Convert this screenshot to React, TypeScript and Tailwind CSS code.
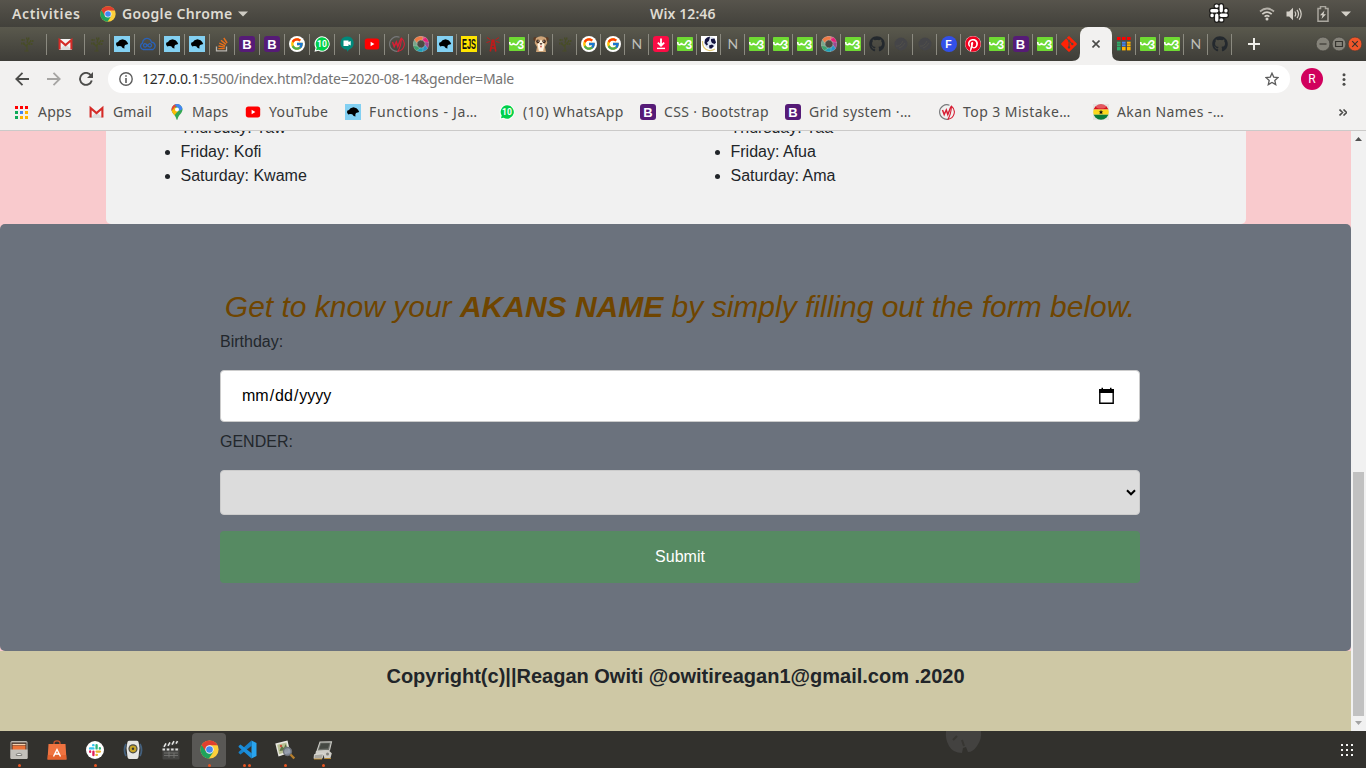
import React from "react";
import { FaGithub, FaPinterest, FaGitAlt } from "react-icons/fa";
import { FcGoogle } from "react-icons/fc";

/* ---------- favicons ---------- */

const Tree = () => (
  <svg width="16" height="16" viewBox="0 0 16 16" fill="none" stroke="#484d27" strokeWidth="1.2">
    <path d="M8 15V8M8 11L4 7M8 9l4-4M5.5 15h4M8 7l1-4" />
    <path d="M2 7.5h4M2.5 4h3M7 2.5h4M11 5h4M10 8h3.5" strokeWidth="2" strokeDasharray="1.4 .6" />
  </svg>
);

const Gmail = () => (
  <svg width="15" height="16" viewBox="0 0 15 16">
    <rect x="1" y="3" width="13" height="11" rx="1" fill="#f4f4f4" />
    <path d="M1 14l6.5-6 6.5 6z" fill="#dcdcdc" />
    <path d="M1.6 13.6V4l5.9 5.1L13.4 4v9.6" fill="none" stroke="#d52b27" strokeWidth="2.1" />
  </svg>
);

const Dino = () => (
  <svg width="16" height="16" viewBox="0 0 16 16">
    <rect width="16" height="16" fill="#83d0f2" />
    <path d="M2.200 6.800L4 6l1.500-1.800 3-.9 3 .9 1.700 1.800 1 2-1.500.5-1.700.6-.7 1.600.2 1.800-1.800-.6-1.500-1.700-2.200-.2-1.700.4-1.200-1.600z" fill="#000" />
  </svg>
);

const Cloud = () => (
  <svg width="17" height="16" viewBox="0 0 17 16" fill="none" stroke="#2a62b8" strokeWidth="1.3">
    <path d="M4 13.500a3.400 3.400 0 01-.6-6.300C3.500 3.400 7 1.700 9.500 2.700c2 .6 2.700 2 3 3.400 4 .3 5 5.200 1.500 7.400z" />
    <path d="M8.500 9.500C7 7.500 6.300 7.400 5.600 7.600c-1.800.8-1.300 3.600.6 3.500C7.500 11 9 8 10.600 7.600c2.400-.2 2.500 3.400.3 3.500-1 0-1.700-.8-2.400-1.600z" />
  </svg>
);

const StackOverflow = () => (
  <svg width="16" height="16" viewBox="0 0 16 16" fill="none">
    <path d="M2.500 10.500v4.300h10v-4.300" stroke="#b8b4ad" strokeWidth="1.300" />
    <path d="M4.300 12.600h6.400M4.500 10l6.300 1.100M5.300 7.200l5.800 2.600M7 4.300l4.900 4.100M9.800 2l3.300 5" stroke="#e8701a" strokeWidth="1.400" />
  </svg>
);

const Boot = () => (
  <span className="flex h-4 w-4 items-center justify-center rounded-[3px] bg-[#561b77] font-['Liberation_Sans',sans-serif] text-[13px] leading-none font-bold text-white">B</span>
);

const Google = () => (
  <span className="flex h-4 w-4 items-center justify-center rounded-full bg-white"><FcGoogle size={14} /></span>
);

const WhatsApp = ({ small }: { small?: boolean }) => (
  <svg width="16" height="16" viewBox="0 0 16 16">
    <path d="M8 .3a7.700 7.700 0 11-3.600 14.500L.5 15.700l1-3.800A7.700 7.700 0 018 .3z" fill={small ? "#f8fff9" : "#fff"} />
    <path d="M8 1.300a6.700 6.700 0 11-3.400 12.400L2 14.200l.7-2.600A6.700 6.700 0 018 1.300z" fill="#00d04a" />
    <text x="7.900" y="11" textAnchor="middle" fontSize="8.500" fontWeight="700" fill="#fff" fontFamily="Roboto, sans-serif">10</text>
  </svg>
);

const Hangouts = () => (
  <svg width="16" height="16" viewBox="0 0 16 16">
    <path d="M8 .4a6.700 6.700 0 012.500 12.900L8 15.800v-2.200A6.600 6.600 0 018 .4z" fill="#00897b" />
    <path d="M4.500 4.500h5v1.600L11.700 5v4.500L9.500 8.300V10h-5z" fill="#fff" />
  </svg>
);

const YouTube = () => (
  <svg width="16" height="16" viewBox="0 0 16 16">
    <rect x=".8" y="2.600" width="14.400" height="10.800" rx="2.600" fill="#f00" />
    <path d="M6.600 5.800v4.400L10.400 8z" fill="#fff" />
  </svg>
);

const Wix = () => (
  <svg width="16" height="16" viewBox="0 0 16 16" fill="none" strokeWidth="1.100">
    <path d="M10 15A7.300 7.300 0 1110.500 1.200" stroke="#77787a" />
    <path d="M12.500 2.200a7.300 7.300 0 01-3.500 13Q12 10 12.500 2.200z" stroke="#d71f35" />
    <path d="M3.500 6l1.700 4.500L7.300 6l1.500 4.500L12 2.500" stroke="#d71f35" strokeWidth="1.500" />
  </svg>
);

const swirlColors = ["#e0567c", "#e91e78", "#9c4a8f", "#2795c9", "#1f9fb5", "#3ea06b", "#7aa58a", "#ee7a45"];
const Swirl = () => (
  <svg width="16" height="16" viewBox="0 0 16 16">
    {swirlColors.map((c, i) => (
      <path key={c} d="M6.500 0C10.500-.2 13.300 1.500 14.500 4.500L11.300 6C10.400 4 8.500 3.300 5.800 4.300z" fill={c} stroke="#c8cfc5" strokeWidth=".3" transform={`rotate(${i * 45} 8 8)`} />
    ))}
  </svg>
);

const Ejs = () => (
  <span className="flex h-4 w-4 bg-[#ffe400]">
    <svg width="16" height="16" viewBox="0 0 16 16">
      <text x="1" y="13.200" textLength="14" lengthAdjust="spacingAndGlyphs" fontSize="14.500" fontWeight="700" fontFamily="'Liberation Sans', sans-serif" fill="#111">EJS</text>
    </svg>
  </span>
);

const Tower = () => (
  <svg width="16" height="16" viewBox="0 0 16 16" fill="none" stroke="#c11a1a">
    <path d="M7 6L5.300 15.500M9 6l1.800 9.500M6 12h4.200M6.500 9h3" strokeWidth="1.600" />
    <circle cx="8" cy="5" r="1.800" fill="#c11a1a" stroke="none" />
    <path d="M5.500 3.800L2 1.500M5 5.500L1.500 6.500M10.500 3.800L14 1.500M11 5.500l3.500 1" strokeWidth="1" />
  </svg>
);

const W3 = () => (
  <svg width="16" height="14" viewBox="0 0 16 14">
    <rect width="16" height="14" rx=".8" fill="#6fda33" />
    <path d="M.8 5v1.200q0 1.600 1.700 1.600T4.500 6q.5 1.800 2.300 1.800T9.500 5" fill="none" stroke="#fff" strokeWidth="1.600" />
    <text x="8.600" y="11.600" fontSize="12" fontWeight="700" fontFamily="'Liberation Sans', sans-serif" fill="#fff">3</text>
  </svg>
);

const Meerkat = () => (
  <svg width="16" height="16" viewBox="0 0 16 16">
    <circle cx="2.300" cy="3" r="2" fill="#5d3b24" />
    <circle cx="13.700" cy="3" r="2" fill="#5d3b24" />
    <path d="M3 2Q8-1.500 13 2l1.300 5-2.300 4 1 5H3l1-5L1.700 7z" fill="#cda377" />
    <path d="M4.500 8.500L8 3.500l3.500 5-1.300 6.500H5.800z" fill="#fff3df" />
    <ellipse cx="4.900" cy="5.300" rx="1.600" ry="1.900" fill="#3b2518" />
    <ellipse cx="11.100" cy="5.300" rx="1.600" ry="1.900" fill="#3b2518" />
    <circle cx="5.200" cy="5" r=".6" fill="#fff" />
    <circle cx="10.800" cy="5" r=".6" fill="#fff" />
    <path d="M6.500 7.200h3L8 9z" fill="#2b1810" />
    <path d="M6.800 9.800h2.400L8 12z" fill="#c8504a" />
  </svg>
);

const Enn = () => (
  <span className="w-4 pl-[3px] font-['Lato',sans-serif] text-[14px] leading-4 text-[#bfbeb8]">N</span>
);

const Download = () => (
  <svg width="16" height="16" viewBox="0 0 16 16">
    <rect width="16" height="16" rx="3" fill="#fb0d45" />
    <path d="M8 2.500v7M4.800 6.700L8 9.700l3.200-3" fill="none" stroke="#fff" strokeWidth="1.800" />
    <path d="M4 12.400h8" stroke="#fff" strokeWidth="1.400" />
  </svg>
);

const Globe = () => (
  <svg width="16" height="16" viewBox="0 0 16 16">
    <rect width="16" height="16" fill="#fff" />
    <path d="M1.500 5Q1 13 8 14.500q3 .3 6-1.500" fill="none" stroke="#e3cb78" strokeWidth="1.200" />
    <circle cx="9" cy="6.500" r="6" fill="#dfe5f2" />
    <path d="M4 3.500Q6 .5 9 .8L8.500 3 7.800 5 6 6.500 7 8.500 5.500 9.500 3.500 7zM10 3l3.500-.5 1.500 4-1.500 1.500L11 7 10 5zM8 9.500l3-1 2 1.500-2.500 2.500H8.500z" fill="#14143f" />
  </svg>
);

const Dim = () => (
  <svg width="16" height="16" viewBox="0 0 16 16">
    <circle cx="8" cy="8" r="6.500" fill="#454548" />
    <path d="M3 10q4 1 7-5M6 12q4-1 6-5" stroke="#504f4a" fill="none" />
  </svg>
);

const Git = () => <FaGitAlt size={18} color="#ff2205" />;
const Hub = () => <FaGithub size={16} color="#24292e" />;
const Pin = () => (
  <span className="flex h-4 w-4 items-center justify-center rounded-full bg-white"><FaPinterest size={16} color="#f0001f" /></span>
);
const Eff = () => (
  <span className="flex h-4 w-4 items-center justify-center rounded-full bg-[#3350e8] font-['Liberation_Sans',sans-serif] text-[10.500px] leading-none font-bold text-white">F</span>
);

const gridColors = ["#f00", "#f00", "#f00", "#0faa58", "#4285f4", "#ffb400", "#0faa58", "#ffb400", "#ffb400"];
const AppsGrid = () => (
  <svg width="13" height="13" viewBox="0 0 13 13">
    {gridColors.map((c, i) => (
      <rect key={i} x={(i % 3) * 5} y={Math.floor(i / 3) * 5} width="3" height="3" fill={c} />
    ))}
  </svg>
);
const tabGridRows = [0, 4.700, 7.300, 9.900];
const TabGrid = () => (
  <svg width="14" height="14" viewBox="0 0 14 14">
    {[0, 5, 10].map((x, col) => (
      <g key={x}>
        <rect x={x} y="0" width="3.600" height="3" fill="#f00" />
        {tabGridRows.slice(1).map((y, row) => (
          <rect key={y} x={x} y={y} width="3.600" height={row === 2 ? 3.500 : 2} fill={col === 0 ? "#2fae6a" : col === 1 && row < 2 ? "#4285f4" : "#ffb400"} />
        ))}
      </g>
    ))}
  </svg>
);

const MapsPin = () => (
  <svg width="16" height="16" viewBox="0 0 16 16">
    <defs>
      <clipPath id="pin"><path d="M8 0a5.500 5.500 0 015.500 5.600C13.500 9.500 9.200 11 8.600 15.200Q8 16.500 7.400 15.200C6.800 11 2.500 9.500 2.500 5.600A5.500 5.500 0 018 0z" /></clipPath>
    </defs>
    <g clipPath="url(#pin)">
      <rect width="16" height="16" fill="#34a853" />
      <path d="M0 0h9L2 8z" fill="#ea4335" />
      <path d="M8-2h8v6L10 7z" fill="#4285f4" />
      <path d="M1 8.500L6 3l3 4-5 6z" fill="#fbbc04" />
      <path d="M5 0h7L9 4z" fill="#4285f4" />
    </g>
    <circle cx="8" cy="5.500" r="2" fill="#fff" />
  </svg>
);

const Ghana = () => (
  <svg width="16" height="16" viewBox="0 0 16 16">
    <rect width="16" height="16" fill="#e4e4e2" />
    <clipPath id="gh"><circle cx="8" cy="8" r="7.800" /></clipPath>
    <g clipPath="url(#gh)">
      <rect width="16" height="5.500" fill="#d8101c" />
      <rect y="5.500" width="16" height="5.200" fill="#fbd81c" />
      <rect y="10.700" width="16" height="5.300" fill="#0a7a38" />
      <ellipse cx="8" cy="2.500" rx="5" ry="2" fill="#fff" opacity=".3" />
    </g>
    <path d="M8 5.800l.7 1.600h1.600L9 8.500l.5 1.800L8 9.200l-1.500 1.100.5-1.800-1.300-1.100h1.600z" fill="#111" />
  </svg>
);

const Chrome = ({ size }: { size: number }) => (
  <svg width={size} height={size} viewBox="0 0 24 24">
    <circle cx="12" cy="12" r="11.500" fill="#fdd03b" />
    <path d="M12 12L2 6.300A11.500 11.500 0 0011.300 23.500L17 14.800z" fill="#1fa35c" />
    <path d="M12 6.700h10.200A11.500 11.500 0 002 6.300l5.400 8.300z" fill="#e0402f" />
    <circle cx="12" cy="12" r="5.300" fill="#f3f5f8" />
    <circle cx="12" cy="12" r="4.200" fill="#4388f2" />
  </svg>
);

const SlackMark = ({ size, colors, halo }: { size: number; colors: string[]; halo?: boolean }) => (
  <svg width={size} height={size} viewBox="0 0 24 24" strokeLinecap="round">
    {halo && [0, 90, 180, 270].map((a) => (
      <path key={a} d="M3.500 9.300h5.800M9.300 3.700h-.4" stroke="#1d1c1a" strokeWidth="7" transform={`rotate(${a} 12 12)`} />
    ))}
    {colors.map((c, i) => (
      <path key={i} d="M3.500 9.300h5.800M9.500 3.700h-.7" stroke={c} strokeWidth="4" transform={`rotate(${i * 90} 12 12)`} />
    ))}
  </svg>
);

/* ---------- browser tabs ---------- */

const firstTabs = [Tree, Dino, Cloud, Dino, Dino, StackOverflow, Boot, Boot, Google, WhatsApp, Hangouts, YouTube];
const nextTabs = [
  Wix, Swirl, Dino, Ejs, Tower, W3, Meerkat, Tree, Google, Google, Enn, Download, W3, Globe, Enn,
  W3, W3, W3, Swirl, W3, Hub, Dim, Dim, Eff, Pin, W3, Boot, W3,
];
const lastTabs = [TabGrid, W3, W3, Enn, Hub];

const Tab = ({ width, children, bare }: { width: string; children: React.ReactNode; bare?: boolean }) => (
  <div className={`flex h-full shrink-0 items-center ${width}`}>
    <div className="flex min-w-0 flex-1 justify-center">{children}</div>
    {!bare && <div className="h-[21px] w-px bg-[#8b8a80]" />}
  </div>
);

const WinButton = ({ red, d }: { red?: boolean; d: string }) => (
  <svg width="16" height="16" viewBox="0 0 16 16">
    <circle cx="8" cy="8" r="6.900" fill={red ? "#f0562a" : "#85837a"} stroke="#3a3934" strokeWidth=".6" />
    <path d={d} fill="none" stroke="#33322d" strokeWidth="1.100" />
  </svg>
);

const TopBar = () => (
  <div className="flex h-[27px] items-center bg-gradient-to-b from-[#57544c] to-[#42413b] font-['Noto_Sans','Open_Sans',sans-serif] text-[14px] font-semibold text-[#dfdbd2]">
    <span className="ml-3 w-[88px] text-[14px] tracking-[0.6px]">Activities</span>
    <Chrome size={16} />
    <span className="ml-1.5 w-[116px] whitespace-nowrap tracking-[0.35px]">Google Chrome</span>
    <svg width="10" height="6" viewBox="0 0 10 6"><path d="M0 .5h10L5 5.500z" fill="#cfccc4" /></svg>
    <span className="ml-[402px] w-[80px] whitespace-nowrap text-[14px] tracking-[0.1px]">Wix 12:46</span>
    <div className="ml-auto flex h-full items-center">
      <span className="-mt-px flex"><SlackMark size={20} halo colors={["#fff", "#fff", "#fff", "#fff"]} /></span>
      <svg className="ml-[30px]" width="16" height="14" viewBox="0 0 16 14" fill="none" stroke="#d4d0c8" strokeWidth="1.700">
        <path d="M1 4.500Q8-1.500 15 4.500" opacity=".75" />
        <path d="M3.300 7.200Q8 3 12.700 7.200M5.600 9.700Q8 7.700 10.400 9.700" />
        <circle cx="8" cy="12" r="1.500" fill="#d4d0c8" stroke="none" />
      </svg>
      <svg className="ml-[11px]" width="16" height="14" viewBox="0 0 16 14">
        <path d="M.5 4.500h2.700L7 .8v12.400L3.200 9.500H.5z" fill="#d4d0c8" />
        <path d="M8.800 4.500q1.800 2.500 0 5M11 2.800q3 4.200 0 8.400M13.200 1.300q4 5.700 0 11.400" fill="none" stroke="#d4d0c8" strokeWidth="1.200" />
      </svg>
      <svg className="ml-[15px]" width="12" height="16" viewBox="0 0 12 16">
        <path d="M1 2.500h2.500v-2h5v2H11v12.700H1z" fill="none" stroke="#aaa79f" strokeWidth="1.500" />
        <path d="M7.500 4.500L3 9.300h2.500L4.500 13 9 8.200H6.500z" fill="#d4d0c8" />
      </svg>
      <svg className="mr-[15px] ml-[12px]" width="10" height="6" viewBox="0 0 10 6"><path d="M0 .5h10L5 5.500z" fill="#d4d0c8" /></svg>
    </div>
  </div>
);

const TabStrip = () => (
  <div className="flex h-[34px] bg-gradient-to-b from-[#5a594d] to-[#3e3d38]">
    <Tab width="w-[47px] pl-2"><Tree /></Tab>
    <Tab width="w-[38px]"><Gmail /></Tab>
    {firstTabs.map((Icon, i) => <Tab key={i} width="w-[25px]"><Icon /></Tab>)}
    {nextTabs.map((Icon, i) => <Tab key={i} width="w-[24px]"><Icon /></Tab>)}
    <Tab width="w-[23px]" bare><Git /></Tab>
    <div className="relative flex w-8 shrink-0 items-center justify-center rounded-t-[8px] bg-[#f2f1f0]">
      <svg className="absolute bottom-0 -left-2" width="8" height="8"><path d="M8 0v8H0Q8 8 8 0z" fill="#f2f1f0" /></svg>
      <svg className="absolute -right-2 bottom-0" width="8" height="8"><path d="M0 0v8h8Q0 8 0 0z" fill="#f2f1f0" /></svg>
      <svg width="8" height="8" viewBox="0 0 8 8"><path d="M.5.5l7 7M7.500.5l-7 7" stroke="#4a4a48" strokeWidth="1.600" /></svg>
    </div>
    {lastTabs.map((Icon, i) => <Tab key={i} width="w-[24px]"><Icon /></Tab>)}
    <div className="flex w-11 items-center justify-center">
      <svg width="12" height="12"><path d="M6 0v12M0 6h12" stroke="#f0efea" strokeWidth="2" /></svg>
    </div>
    <div className="mr-[3px] ml-auto flex items-center">
      <WinButton d="M4.500 8h7" />
      <WinButton d="M4.600 5.500h6.800v5H4.600z" />
      <WinButton red d="M5.200 5.200l5.600 5.600M10.800 5.200l-5.600 5.600" />
    </div>
  </div>
);

const Toolbar = () => (
  <div className="flex h-9 items-center">
    <svg className="ml-[15px]" width="14" height="14" viewBox="0 0 14 14" fill="none" stroke="#4c4c4a" strokeWidth="1.800"><path d="M14 7H1.500M7.500.8L1.300 7l6.200 6.200" /></svg>
    <svg className="ml-[18px]" width="14" height="14" viewBox="0 0 14 14" fill="none" stroke="#a6a5a3" strokeWidth="1.800"><path d="M0 7h12.500M6.500.8L12.700 7l-6.200 6.200" /></svg>
    <svg className="ml-[18px]" width="14" height="14" viewBox="0 0 14 14"><path d="M12 3.500A6 6 0 1012.800 8.500" fill="none" stroke="#4c4c4a" strokeWidth="1.900" /><path d="M14 0v6H8z" fill="#4c4c4a" /></svg>
    <div className="ml-[15px] flex h-7 w-[1182px] items-center rounded-full bg-white">
      <svg className="ml-[11px]" width="14" height="14" viewBox="0 0 14 14"><circle cx="7" cy="7" r="6.200" fill="none" stroke="#5d5d5d" strokeWidth="1.400" /><path d="M7 3.200v1.500M7 6v5" stroke="#5d5d5d" strokeWidth="1.600" /></svg>
      <span className="ml-[9px] whitespace-nowrap font-['Noto_Sans','Open_Sans',sans-serif] text-[14px] leading-5 tracking-[-0.24px] text-[#747474]"><span className="text-[#2d2d2d]">127.0.0.1</span>:5500/index.html?date=2020-08-14&amp;gender=Male</span>
      <svg className="mr-[11px] ml-auto" width="14" height="14" viewBox="0 0 24 24" fill="none" stroke="#5c5c5c" strokeWidth="2.200"><path d="M12 2l3 6.800 7.300.7-5.500 4.900 1.600 7.200L12 17.800l-6.400 3.800 1.600-7.200L1.700 9.500 9 8.800z" /></svg>
    </div>
    <span className="ml-[11px] flex h-[22px] w-[22px] items-center justify-center rounded-full bg-[#d1005d] font-['Roboto',sans-serif] text-[12px] text-white">R</span>
    <svg className="ml-[19px]" width="4" height="13" viewBox="0 0 4 13" fill="#4c4c4a"><circle cx="2" cy="1.700" r="1.500" /><circle cx="2" cy="6.500" r="1.500" /><circle cx="2" cy="11.300" r="1.500" /></svg>
  </div>
);

const bookmarks: { icon: React.ReactNode; label: string; pad: string; gap: string; track: string }[] = [
  { icon: <AppsGrid />, label: "Apps", pad: "w-[75px] pl-[15px]", gap: "ml-[10px]", track: "tracking-[0.2px]" },
  { icon: <Gmail />, label: "Gmail", pad: "w-[94px] pl-[14px]", gap: "ml-[9px]", track: "tracking-[0.1px]" },
  { icon: <MapsPin />, label: "Maps", pad: "w-[76px]", gap: "ml-[7px]", track: "tracking-[0.1px]" },
  { icon: <YouTube />, label: "YouTube", pad: "w-[100px]", gap: "ml-[8px]", track: "tracking-[0.4px]" },
  { icon: <Dino />, label: "Functions - Ja…", pad: "w-[154px]", gap: "ml-[8px]", track: "tracking-[0.7px]" },
  { icon: <WhatsApp small />, label: "(10) WhatsApp", pad: "w-[141px]", gap: "ml-[8px]", track: "tracking-[0.4px]" },
  { icon: <Boot />, label: "CSS · Bootstrap", pad: "w-[145px]", gap: "ml-[8px]", track: "tracking-[0.32px]" },
  { icon: <Boot />, label: "Grid system ·…", pad: "w-[154px]", gap: "ml-[8px]", track: "tracking-[0.4px]" },
  { icon: <Wix />, label: "Top 3 Mistake…", pad: "w-[154px]", gap: "ml-[8px]", track: "tracking-[0.45px]" },
  { icon: <Ghana />, label: "Akan Names -…", pad: "w-[154px]", gap: "ml-[8px]", track: "tracking-[0.4px]" },
];

const Bookmarks = () => (
  <div className="flex h-[33px] items-center pb-[3px] font-['Noto_Sans','Open_Sans',sans-serif] text-[14px] text-[#4f4f4d]">
    {bookmarks.map((b) => (
      <div key={b.label} className={`flex shrink-0 items-center whitespace-nowrap ${b.pad}`}>
        {b.icon}
        <span className={`leading-5 ${b.gap} ${b.track}`}>{b.label}</span>
      </div>
    ))}
    <svg className="mr-[19px] ml-auto" width="8" height="7" viewBox="0 0 8 7"><path d="M.5.500l3 3-3 3M4.500.500l3 3-3 3" fill="none" stroke="#4c4c4a" strokeWidth="1.600" /></svg>
  </div>
);

/* ---------- page ---------- */

const NameList = ({ names }: { names: string[] }) => (
  <ul className="w-[550px] shrink-0 list-disc leading-6">
    {names.map((n) => <li key={n}>{n}</li>)}
  </ul>
);

const Page = () => (
  <div className="flex min-w-0 flex-1 flex-col bg-[#f9cacd] font-['Liberation_Sans',Arial,sans-serif] text-[16px] text-[#212529]">
    <div className="ml-[106px] h-[93px] w-[1140px] overflow-hidden rounded-b-[5px] bg-[#f1f1f1]">
      <div className="-mt-[15px] flex pl-[74.500px]">
        <NameList names={["Thursday: Yaw", "Friday: Kofi", "Saturday: Kwame"]} />
        <NameList names={["Thursday: Yaa", "Friday: Afua", "Saturday: Ama"]} />
      </div>
    </div>
    <form className="h-[427px] rounded-[5px] bg-[#6b727d] pt-[64px] pl-[220px]">
      <div className="flex w-[920px] flex-col">
        <h2 className="h-[42px] text-center text-[30px] leading-[38px] whitespace-nowrap text-[#6f4500] italic">
          Get to know your <b>AKANS NAME</b> by simply filling out the form below.
        </h2>
        <label className="h-10 leading-6 text-[#22272c]">Birthday:</label>
        <div className="flex h-[52px] items-center justify-between rounded-[4px] border border-[#ccc] bg-white pr-[24px] pl-[21px] text-black">
          <span className="flex gap-px"><span>mm</span><span>/</span><span>dd</span><span>/</span><span>yyyy</span></span>
          <svg width="17" height="18" viewBox="0 0 17 18">
            <path d="M1.800 3.500h13.400v12.700H1.800z" fill="none" stroke="#000" strokeWidth="1.400" />
            <path d="M1 2h15v4H1zM3.500.800h1.500V3H3.500zM12 .800h1.500V3H12z" />
          </svg>
        </div>
        <label className="h-12 pt-2 leading-6 text-[#22272c]">GENDER:</label>
        <div className="flex h-[45px] items-center justify-end rounded-[4px] border border-[#ccc] bg-[#dcdcdc] pr-[3px]">
          <svg width="10" height="7" viewBox="0 0 10 7"><path d="M1 1.300l4 4 4-4" fill="none" stroke="#000" strokeWidth="2" /></svg>
        </div>
        <button type="button" className="mt-4 h-[52px] rounded-[4px] bg-[#568a62] text-[16px] text-white">Submit</button>
      </div>
    </form>
    <footer className="flex-1 bg-[#cec8a5] pt-[10px] text-center text-[20px] leading-[30px] font-bold">
      Copyright(c)||Reagan Owiti @owitireagan1@gmail.com .2020
    </footer>
  </div>
);

const Scrollbar = () => (
  <div className="flex w-[15px] shrink-0 flex-col items-center bg-[#f1f1f1]">
    <svg className="mt-[6px]" width="7" height="4"><path d="M0 4l3.500-4L7 4z" fill="#505050" /></svg>
    <div className="mt-[331px] h-[244px] w-[11px] bg-[#c1c1c1]" />
    <svg className="mt-[5px]" width="7" height="4"><path d="M0 0l3.500 4L7 0z" fill="#a3a3a3" /></svg>
  </div>
);

/* ---------- dock ---------- */

const Files = () => (
  <svg width="20" height="20" viewBox="0 0 20 20">
    <rect x="1.500" y="1" width="17" height="18" rx="1.500" fill="#b9b6af" />
    <rect x="2.500" y="2.500" width="15" height="8" fill="#463026" />
    <path d="M3.500 5.500h13V10h-13z" fill="#eb7338" /><path d="M3.500 4.500h13" stroke="#f6d2ae" strokeWidth="1.300" />
    <path d="M1.500 9.500h17V18q0 1-1 1h-15q-1 0-1-1z" fill="#c3c0ba" />
    <path d="M7.300 15.500v-1.300q2.700-2 5.400 0v1.300z" fill="#f4f3f1" stroke="#6b6965" strokeWidth=".8" />
  </svg>
);
const Software = () => (
  <svg width="20" height="20" viewBox="0 0 20 20">
    <path d="M7 6V3q0-2.200 3-2.200T13 3v3" fill="none" stroke="#c5502a" strokeWidth="1.300" />
    <path d="M1.500 4h17L19.500 19.500H.5z" fill="#ef7340" />
    <path d="M.8 15h18.400l.3 4.500H.5z" fill="#e4632f" />
    <path d="M6.500 16.500l3.500-7 3.500 7M7.500 14h5" fill="none" stroke="#fff" strokeWidth="1.400" />
  </svg>
);
const SlackApp = () => (
  <span className="flex h-[18px] w-[18px] items-center justify-center rounded-full bg-white">
    <SlackMark size={14} colors={["#36c5f0", "#2eb67d", "#ecb22e", "#e01e5a"]} />
  </span>
);
const Speaker = () => (
  <svg width="20" height="20" viewBox="0 0 20 20">
    <path d="M3 4q-3 6 0 12M17 4q3 6 0 12" fill="none" stroke="#44607d" strokeWidth="1.800" />
    <path d="M6 .8h8q1.500 0 1.700 2L16.500 8l-1 9q-.2 2-2 2h-7q-1.800 0-2-2l-1-9 .8-5.200Q4.500.8 6 .8z" fill="#e6e6e3" />
    <circle cx="10" cy="8.800" r="4.600" fill="#4a4a46" /><circle cx="10" cy="8.800" r="3.400" fill="#c7a527" /><circle cx="10" cy="8.800" r="1.200" fill="#383733" />
  </svg>
);
const Clapper = () => (
  <svg width="20" height="20" viewBox="0 0 20 20">
    <path d="M1 5.500L17.500.8l.8 3L1.800 8z" fill="#3c3c3a" />
    <path d="M3 6.800l2-3.500M7 5.800l2-3.500M11 4.700l2-3.500M15 3.700l1.500-2.500" stroke="#e6e6e4" strokeWidth="1.600" />
    <rect x="1.500" y="8" width="17" height="11.500" rx="1" fill="#454543" />
    <path d="M1.500 9.500h17" stroke="#e0e0de" strokeWidth="2" strokeDasharray="2.500 1.800" />
    <path d="M3 13h14M3 15.500h14M8 11.500v6M13 13v5" stroke="#747472" strokeWidth=".9" />
  </svg>
);
const Code = () => (
  <svg width="19" height="19" viewBox="0 0 19 19">
    <path d="M13.500.5L18.500 3v13l-5 2.500z" fill="#29a4ee" />
    <path d="M13.500.5L14 5.500 2.500 14.500.6 13v-1z" fill="#1682cb" />
    <path d="M13.500 18.500L14 13.500 2.500 4.500.6 6v1z" fill="#1b8fdc" />
  </svg>
);
const ImageViewer = () => (
  <svg width="20" height="20" viewBox="0 0 20 20">
    <path d="M.3 3.500L12.500.5l2.800 12L3.500 16.500z" fill="#e9e8e1" />
    <path d="M2.200 4.800l9.200-2.200 2 8.700-9.300 3z" fill="#b8bf94" />
    <path d="M4.500 11l2-5 2.500 2 1.500-4 2.500 6z" fill="#5c7448" /><circle cx="6" cy="6" r="1.200" fill="#c6503c" />
    <circle cx="12.500" cy="11.500" r="4" fill="#8e97a8" fillOpacity=".9" stroke="#6b6f77" strokeWidth="1.300" />
    <path d="M15.500 14.500l3.800 4" stroke="#b67e2c" strokeWidth="2.300" />
  </svg>
);
const Scanner = () => (
  <svg width="20" height="20" viewBox="0 0 20 20">
    <path d="M7 2l11.500-.3-2 8.500L4 11z" fill="#6d706a" stroke="#c9c9c3" strokeWidth="1.100" />
    <path d="M8 3.500l8.500-.3-1.500 5.300-8.800.5z" fill="#454943" />
    <path d="M3 11l12.500-.7 3.300 3-1.300 4.700-6 .7-1-3.700-8.500.5z" fill="#cfcec8" />
    <path d="M1.500 14.500l9-.7-1.500 4.700H1z" fill="#a9a8a2" stroke="#e6e5e0" strokeWidth=".8" />
    <path d="M1 19h8M11.500 18.500h6.500" stroke="#b98a32" strokeWidth="1.200" />
    <circle cx="14.500" cy="14" r="1.500" fill="#84827d" />
  </svg>
);

const dock: { icon: React.ReactNode; dots: number; active?: boolean }[] = [
  { icon: <Files />, dots: 1 },
  { icon: <Software />, dots: 0 },
  { icon: <SlackApp />, dots: 1 },
  { icon: <Speaker />, dots: 0 },
  { icon: <Clapper />, dots: 0 },
  { icon: <Chrome size={19} />, dots: 1, active: true },
  { icon: <Code />, dots: 2 },
  { icon: <ImageViewer />, dots: 1 },
  { icon: <Scanner />, dots: 1 },
];

const Dock = () => (
  <div className="relative flex h-[37px] items-center gap-1 bg-[#32312d] pl-[2px]">
    {dock.map((d, i) => (
      <div key={i} className={`relative flex h-[34px] w-[34px] items-center justify-center rounded-[4px] ${d.active ? "bg-[#595855]" : ""}`}>
        {d.icon}
        <div className="absolute inset-x-0 bottom-0 flex justify-center gap-[2px]">
          {Array.from({ length: d.dots }).map((_, k) => <span key={k} className="h-[3px] w-[3px] rounded-full bg-[#e95420]" />)}
        </div>
      </div>
    ))}
    <svg className="absolute top-0 left-[945px]" width="38" height="24" viewBox="0 0 38 24">
      <path d="M1 0h35q1 8-4 15-4 6-9 6l-2-5-3 1-1 5Q8 22 4 15 0 8 1 0z" fill="#434240" />
      <path d="M8 9l4-4M17 9l2 6" fill="none" stroke="#373632" strokeWidth="2" />
    </svg>
    <svg className="mr-[12px] ml-auto mt-px" width="13" height="13">
      {Array.from({ length: 9 }).map((_, i) => <rect key={i} x={(i % 3) * 5} y={Math.floor(i / 3) * 5} width="2" height="2" fill="#f4f4f2" />)}
    </svg>
  </div>
);

export default function App() {
  return (
    <div className="flex h-[768px] w-[1366px] flex-col overflow-hidden">
      <TopBar />
      <TabStrip />
      <div className="h-[70px] shrink-0 border-b border-[#cbcac9] bg-[#f2f1f0]">
        <Toolbar />
        <Bookmarks />
      </div>
      <div className="flex h-[600px] shrink-0">
        <Page />
        <Scrollbar />
      </div>
      <Dock />
    </div>
  );
}
